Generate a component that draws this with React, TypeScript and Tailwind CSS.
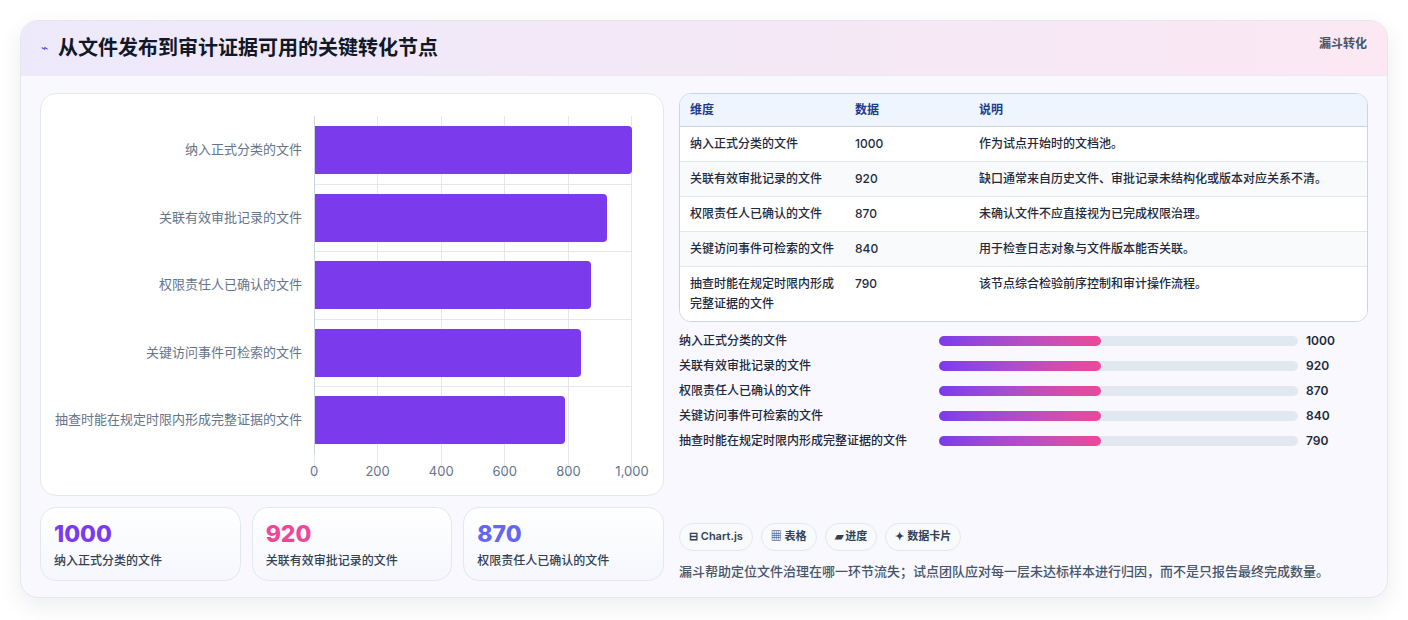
const rows = [
  { name: "纳入正式分类的文件", v: 1000, note: "作为试点开始时的文档池。" },
  { name: "关联有效审批记录的文件", v: 920, note: "缺口通常来自历史文件、审批记录未结构化或版本对应关系不清。" },
  { name: "权限责任人已确认的文件", v: 870, note: "未确认文件不应直接视为已完成权限治理。" },
  { name: "关键访问事件可检索的文件", v: 840, note: "用于检查日志对象与文件版本能否关联。" },
  { name: "抽查时能在规定时限内形成完整证据的文件", v: 790, note: "该节点综合检验前序控制和审计操作流程。" },
];

function BarChart() {
  const ticks = [0, 200, 400, 600, 800, 1000];
  return (
    <div className="h-[403px] rounded-2xl border border-[#e2e8f0] bg-white pt-[22px] pr-[31px] pl-[12px]">
      <div className="flex">
        <div className="flex w-[261px] flex-col">
          {rows.map((r) => (
            <div key={r.name} className="flex h-[67.5px] items-center justify-end pr-[12px] text-[13px] text-[#64748b]">
              {r.name}
            </div>
          ))}
        </div>
        <div className="relative w-[318px]">
          <div className="absolute inset-0 flex justify-between">
            {ticks.map((t) => (
              <div key={t} className="h-full w-px bg-[#e5e7eb]" />
            ))}
          </div>
          <div className="relative flex flex-col border-l border-[#cbd5e1]">
            {rows.map((r, i) => (
              <div key={r.name} className={`flex h-[67.5px] items-center ${i > 0 ? "border-t border-[#e5e7eb]" : ""}`}>
                <div className="h-[48px] rounded-r-sm bg-[#7c3aed]" style={{ width: `${(r.v / 1000) * 100}%` }} />
              </div>
            ))}
          </div>
          <div className="relative mt-[8px] h-4">
            {ticks.map((t) => (
              <span key={t} className="absolute -translate-x-1/2 text-[13px] text-[#64748b]" style={{ left: `${t / 10}%` }}>
                {t === 1000 ? "1,000" : t}
              </span>
            ))}
          </div>
        </div>
      </div>
    </div>
  );
}

export default function App() {
  return (
    <div className="min-h-[620px] bg-white p-[20px]" style={{ fontFamily: "Inter, 'Noto Sans CJK SC', sans-serif" }}>
      <div className="overflow-hidden rounded-[18px] border border-[#e2e8f0] bg-[#f8f8fe] shadow-[0_8px_24px_rgba(15,23,42,0.08)]">
        <div className="flex h-[55px] items-center justify-between bg-gradient-to-r from-[#ede9fb] to-[#fbe8f3] px-[20px] border-b border-[#ece8f5]">
          <div className="flex items-center gap-[10px]">
            <span className="text-[12px] text-[#4f46e5]">⌁</span>
            <h1 className="text-[20px] font-bold text-[#111827]">从文件发布到审计证据可用的关键转化节点</h1>
          </div>
          <span className="-mt-[8px] text-[12px] font-semibold text-[#475569]">漏斗转化</span>
        </div>
        <div className="flex gap-[15px] px-[19px] pt-[17px] pb-[16px]">
          <div className="flex w-[624px] flex-col gap-[11px]">
            <BarChart />
            <div className="grid grid-cols-3 gap-[11px]">
              {[
                { v: 1000, c: "text-[#7c3aed]", l: rows[0].name },
                { v: 920, c: "text-[#ec4899]", l: rows[1].name },
                { v: 870, c: "text-[#6366f1]", l: rows[2].name },
              ].map((k) => (
                <div key={k.v} className="h-[74px] rounded-2xl border border-[#e2e8f0] bg-gradient-to-b from-white to-[#f5f7fc] px-[13px] pt-[12px]">
                  <div className={`text-[23px] font-extrabold leading-[28px] ${k.c}`}>{k.v}</div>
                  <div className="mt-[4px] text-[12px] font-medium text-[#334155]">{k.l}</div>
                </div>
              ))}
            </div>
          </div>
          <div className="flex flex-1 flex-col">
            <div className="overflow-hidden rounded-xl border border-[#cbd5e1] bg-white text-[12px] font-medium text-[#1e293b]">
              <div className="flex h-[33px] items-center bg-[#eef5ff] border-b border-[#cbd5e1] font-semibold text-[#1e3a8a]">
                <div className="w-[175px] pl-[10px]">维度</div>
                <div className="w-[124px]">数据</div>
                <div>说明</div>
              </div>
              {rows.map((r, i) => (
                <div key={r.name} className={`flex items-start py-[7px] leading-[20px] ${i > 0 ? "border-t border-[#e2e8f0]" : ""} ${i % 2 === 1 ? "bg-[#f8fafc]" : "bg-white"}`}>
                  <div className="w-[175px] pl-[10px] pr-[12px]">{r.name}</div>
                  <div className="w-[124px]">{r.v}</div>
                  <div className="flex-1">{r.note}</div>
                </div>
              ))}
            </div>
            <div className="mt-[10px] flex flex-col gap-[7px]">
              {rows.map((r) => (
                <div key={r.name} className="flex h-[18px] items-center text-[12px] font-medium text-[#1e293b]">
                  <div className="w-[260px]">{r.name}</div>
                  <div className="h-[10px] w-[359px] rounded-full bg-[#e2e8f0]">
                    <div className="h-full w-[45%] rounded-full bg-gradient-to-r from-[#7c3aed] to-[#ec4899]" />
                  </div>
                  <div className="ml-[8px] font-semibold">{r.v}</div>
                </div>
              ))}
            </div>
            <div className="mt-auto flex gap-[8px]">
              {["⊟ Chart.js", "▦ 表格", "▰ 进度", "✦ 数据卡片"].map((t) => (
                <span key={t} className="flex h-[28px] items-center rounded-full border border-[#e2e8f0] bg-[#f8fafc] px-[9px] text-[11px] font-semibold text-[#334155]">
                  {t}
                </span>
              ))}
            </div>
            <p className="mt-[11px] text-[13px] font-medium text-[#475569]">漏斗帮助定位文件治理在哪一环节流失；试点团队应对每一层未达标样本进行归因，而不是只报告最终完成数量。</p>
          </div>
        </div>
      </div>
    </div>
  );
}
